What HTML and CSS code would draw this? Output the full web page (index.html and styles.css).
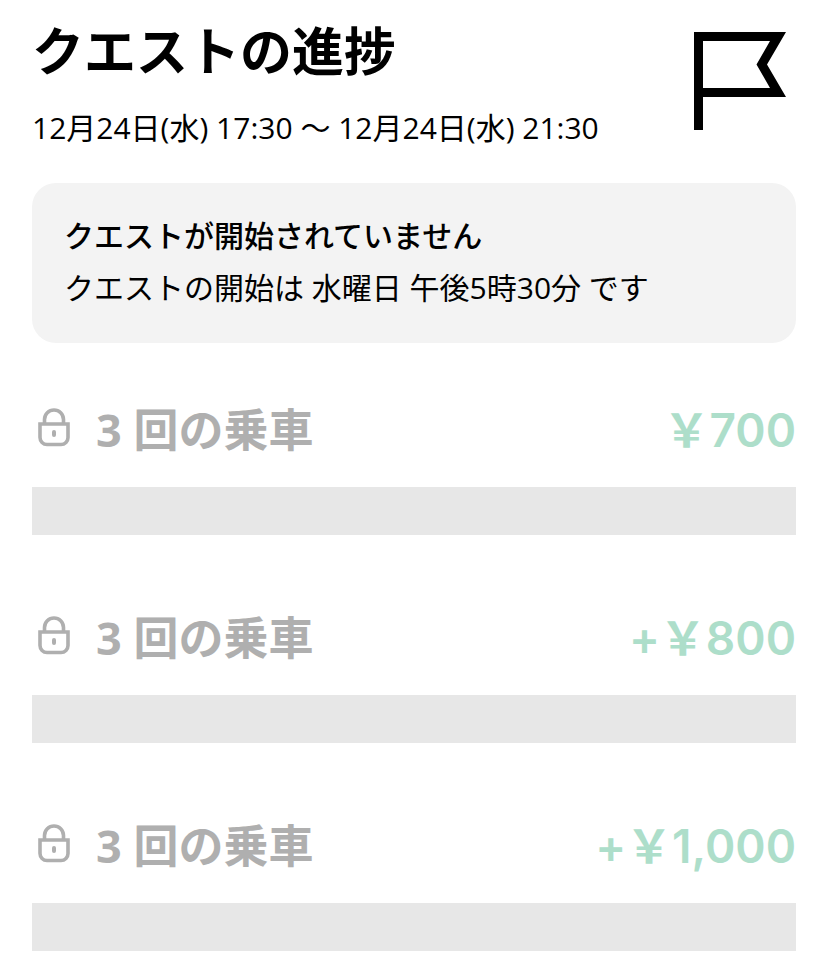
FILE: index.html
```html
<!DOCTYPE html>
<html lang="ja">
<head>
    <meta charset="UTF-8">
    <meta name="viewport" content="width=device-width, initial-scale=1.0">
    <title>クエストの進捗</title>
    <link rel="stylesheet" href="styles.css">
</head>
<body>

<svg class="icon-defs" aria-hidden="true">
    <symbol id="lock" viewBox="0 1 44 44">
        <path d="M12.500 16v-3.500a9.500 9.500 0 0 1 19 0V16" fill="none" stroke="currentColor" stroke-width="3.600"/>
        <path d="M8 17h28V30.500a7 7 0 0 1-7 7H15a7 7 0 0 1-7-7z" fill="none" stroke="currentColor" stroke-width="3.600"/>
        <rect x="20" y="23" width="4" height="7" rx="2" fill="currentColor"/>
    </symbol>
</svg>

<main class="container">
    <header class="header">
        <div>
            <h1>クエストの進捗</h1>
            <p class="period">12月24日(水) 17:30 〜 12月24日(水) 21:30</p>
        </div>
        <svg class="flag" viewBox="0 0 92 98" aria-hidden="true">
            <path fill-rule="evenodd" d="M0 0h92L73 32.500 92 65H9v33H0zM9 9v47h67L62.500 32.500 76 9z"/>
        </svg>
    </header>

    <section class="notice">
        <h2>クエストが開始されていません</h2>
        <p>クエストの開始は 水曜日 午後5時30分 です</p>
    </section>

    <section class="quest">
        <div class="quest-row">
            <svg class="lock" aria-hidden="true"><use href="#lock"/></svg>
            <h3>3 回の乗車</h3>
            <span class="reward">&#xFFE5;700</span>
        </div>
        <div class="bar"></div>
    </section>

    <section class="quest">
        <div class="quest-row">
            <svg class="lock" aria-hidden="true"><use href="#lock"/></svg>
            <h3>3 回の乗車</h3>
            <span class="reward">+&#xFFE5;800</span>
        </div>
        <div class="bar"></div>
    </section>

    <section class="quest">
        <div class="quest-row">
            <svg class="lock" aria-hidden="true"><use href="#lock"/></svg>
            <h3>3 回の乗車</h3>
            <span class="reward">+&#xFFE5;1,000</span>
        </div>
        <div class="bar"></div>
    </section>
</main>

</body>
</html>
```
FILE: styles.css
```css
body {
    font-family: "Open Sans", "Noto Sans CJK JP", sans-serif;
    margin: 0;
    background-color: #fff;
    color: #000;
}
h1, h2, h3, p {
    margin: 0;
}
.icon-defs {
    display: none;
}
.container {
    padding: 16px 32px 24px;
}

/* Title, period and flag */
.header {
    display: flex;
    justify-content: space-between;
    align-items: flex-start;
}
h1 {
    font-size: 52px;
    line-height: 70px;
    font-weight: 700;
}
.period {
    margin-top: 18px;
    font-size: 30px;
    line-height: 48px;
}
.flag {
    flex: none;
    width: 92px;
    height: 98px;
    margin: 16px 10px 0 0;
}

/* Notice box */
.notice {
    margin-top: 31px;
    padding: 27px 32px 29px;
    background-color: #f3f3f3;
    border-radius: 24px;
    font-size: 30px;
    line-height: 52px;
}
.notice h2 {
    font-size: 30px;
    font-weight: 500;
}

/* Quest steps */
.quest {
    margin-top: 56px;
}
.quest + .quest {
    margin-top: 72px;
}
.quest-row {
    display: flex;
    align-items: center;
    height: 62px;
    margin-bottom: 26px;
}
.lock {
    width: 44px;
    height: 44px;
    margin-right: 20px;
    color: #afafaf;
}
h3 {
    flex: 1;
    font-size: 45px;
    line-height: 62px;
    font-weight: 700;
    color: #afafaf;
}
.reward {
    font-family: Inter, "Noto Sans CJK JP", sans-serif;
    font-size: 46px;
    line-height: 62px;
    font-weight: 600;
    color: #addeca;
}
.bar {
    height: 48px;
    background-color: #e7e7e7;
}
```
